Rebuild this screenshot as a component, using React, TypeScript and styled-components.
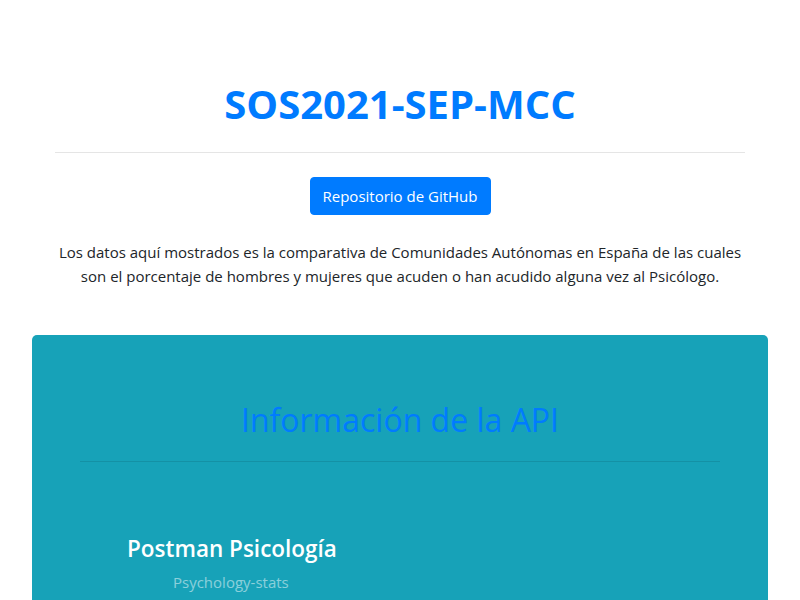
import React from "react";
import styled, { createGlobalStyle } from "styled-components";

const FONT = `"Segoe UI", "Open Sans", "Noto Sans", "Liberation Sans", sans-serif`;

const Global = createGlobalStyle`
  html, body { margin: 0; padding: 0; background: #fff; }
  body { font-family: ${FONT}; color: #212529; font-size: 16px; line-height: 1.5; }
  * { box-sizing: border-box; }
`;

const Page = styled.main`
  display: flex;
  flex-direction: column;
  padding-top: 80px;
`;

const Container = styled.section`
  width: 720px;
  margin: 0 auto;
  padding: 0 15px;
  display: flex;
  flex-direction: column;
  align-items: center;
`;

const Title = styled.h1`
  margin: 0 0 8px;
  font-size: 40px;
  line-height: 48px;
  font-weight: 700;
  color: #007bff;
  text-align: center;
`;

const Rule = styled.hr<{ $tone?: "light" | "dark" }>`
  align-self: stretch;
  margin: 16px 0;
  border: 0;
  border-top: 1px solid ${(p) => (p.$tone === "dark" ? "rgba(0,0,0,0.1)" : "#e5e5e5")};
`;

const Button = styled.a`
  margin-top: 8px;
  display: inline-block;
  padding: 6px 12px;
  border: 1px solid #007bff;
  border-radius: 4px;
  background: #007bff;
  color: #fff;
  font-size: 15px;
  line-height: 24px;
  text-decoration: none;
`;

const Lead = styled.p`
  margin: 25px 0 0;
  font-size: 15px;
  line-height: 24px;
  text-align: center;
  color: #212529;
`;

const Jumbo = styled.section`
  margin: 47px 32px 0;
  padding: 66px 48px 40px;
  background: #17a2b8;
  border-radius: 5px;
  display: flex;
  flex-direction: column;
`;

const JumboTitle = styled.h2`
  margin: 0 0 6px;
  font-size: 32px;
  line-height: 38px;
  font-weight: 400;
  color: #007bff;
  text-align: center;
`;

const Entry = styled.div`
  margin-top: 57px;
  padding-left: 47px;
  display: flex;
  flex-direction: column;
`;

const EntryTitle = styled.h3`
  margin: 0;
  font-size: 22.5px;
  line-height: 27px;
  font-weight: 600;
  color: #fff;
`;

const EntrySub = styled.span`
  padding-left: 46px;
  margin-top: 8px;
  font-size: 15px;
  line-height: 24px;
  color: rgba(255, 255, 255, 0.5);
`;

export default function App() {
  return (
    <>
      <Global />
      <Page>
        <Container>
          <Title>SOS2021-SEP-MCC</Title>
          <Rule />
          <Button href="#">Repositorio de GitHub</Button>
          <Lead>
            Los datos aquí mostrados es la comparativa de Comunidades Autónomas en España de las cuales
            son el porcentaje de hombres y mujeres que acuden o han acudido alguna vez al Psicólogo.
          </Lead>
        </Container>
        <Jumbo>
          <JumboTitle>Información de la API</JumboTitle>
          <Rule $tone="dark" />
          <Entry>
            <EntryTitle>Postman Psicología</EntryTitle>
            <EntrySub>Psychology-stats</EntrySub>
          </Entry>
        </Jumbo>
      </Page>
    </>
  );
}
